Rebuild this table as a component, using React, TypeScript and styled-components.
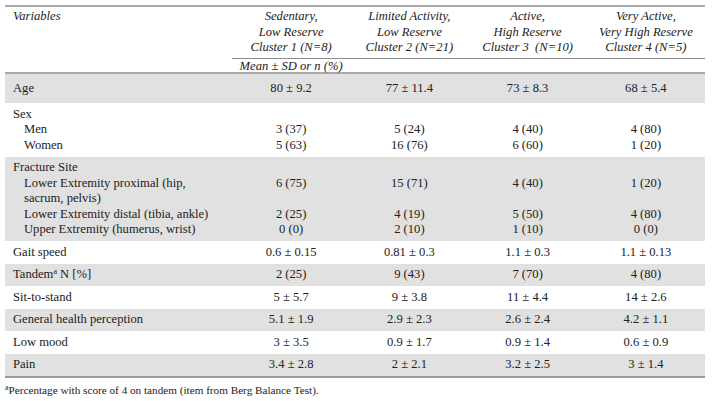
import React from "react";
import styled, { createGlobalStyle } from "styled-components";

const GlobalStyle = createGlobalStyle`
  html, body { margin: 0; padding: 0; background: #ffffff; }
  body { font-family: "Liberation Serif", "Times New Roman", serif; color: #222; }
`;

const Page = styled.div`
  padding: 5px 7px 0 5px;
  width: 700px;
`;

const Table = styled.table`
  width: 700px;
  table-layout: fixed;
  border-collapse: collapse;
  font-size: 12.6px;
  line-height: 15.5px;
  border-top: 2px solid #a9a9a9;
  border-bottom: 2px solid #9a9a9a;
`;

const HeadCell = styled.th<{ $left?: boolean; $rule?: boolean }>`
  font-weight: normal;
  font-style: italic;
  text-align: ${(p) => (p.$left ? "left" : "center")};
  vertical-align: top;
  padding: 2px ${(p) => (p.$left ? "0 0 8px" : "0 2px 0")};
  border-bottom: ${(p) => (p.$rule ? "1px solid #8c8c8c" : "none")};
  white-space: pre;
`;

const SubHeadRow = styled.tr`
  border-bottom: 2px solid #a9a9a9;
`;

const SubHead = styled.th`
  font-weight: normal;
  font-style: italic;
  text-align: center;
  line-height: 12px;
  height: 12px;
  padding: 1px 0 0;
`;

const Row = styled.tr<{ $shade?: boolean }>`
  background: ${(p) => (p.$shade ? "#e1e1e1" : "transparent")};
`;

const LabelCell = styled.td<{ $pad: number }>`
  padding: ${(p) => p.$pad}px 0 ${(p) => p.$pad}px 8px;
  text-align: left;
  vertical-align: top;
`;

const ValueCell = styled.td<{ $pad: number }>`
  padding: ${(p) => p.$pad}px 0;
  text-align: center;
  vertical-align: top;
`;

const Line = styled.div<{ $indent?: boolean }>`
  height: 15.5px;
  padding-left: ${(p) => (p.$indent ? "11px" : "0")};
  white-space: nowrap;
`;

const Sup = styled.sup`
  font-size: 8px;
  line-height: 0;
  vertical-align: 4px;
`;

const Footnote = styled.p`
  margin: 6px 0 0;
  font-size: 11.2px;
  line-height: 13px;
  color: #222;
`;

type Item = { label: React.ReactNode; values: string[]; indent?: boolean };

type RowData =
  | { kind: "single"; label: React.ReactNode; values: string[]; pad: number; shade: boolean }
  | { kind: "group"; items: Item[]; shade: boolean };

const rows: RowData[] = [
  { kind: "single", label: "Age", values: ["80 ± 9.2", "77 ± 11.4", "73 ± 8.3", "68 ± 5.4"], pad: 7, shade: true },
  {
    kind: "group",
    shade: false,
    items: [
      { label: "Sex", values: ["", "", "", ""] },
      { label: "Men", values: ["3 (37)", "5 (24)", "4 (40)", "4 (80)"], indent: true },
      { label: "Women", values: ["5 (63)", "16 (76)", "6 (60)", "1 (20)"], indent: true },
    ],
  },
  {
    kind: "group",
    shade: true,
    items: [
      { label: "Fracture Site", values: ["", "", "", ""] },
      { label: "Lower Extremity proximal (hip,", values: ["6 (75)", "15 (71)", "4 (40)", "1 (20)"], indent: true },
      { label: "sacrum, pelvis)", values: ["", "", "", ""], indent: true },
      { label: "Lower Extremity distal (tibia, ankle)", values: ["2 (25)", "4 (19)", "5 (50)", "4 (80)"], indent: true },
      { label: "Upper Extremity (humerus, wrist)", values: ["0 (0)", "2 (10)", "1 (10)", "0 (0)"], indent: true },
    ],
  },
  { kind: "single", label: "Gait speed", values: ["0.6 ± 0.15", "0.81 ± 0.3", "1.1 ± 0.3", "1.1 ± 0.13"], pad: 3.5, shade: false },
  {
    kind: "single",
    label: (
      <>
        Tandem<Sup>a</Sup> N [%]
      </>
    ),
    values: ["2 (25)", "9 (43)", "7 (70)", "4 (80)"],
    pad: 3.5,
    shade: true,
  },
  { kind: "single", label: "Sit-to-stand", values: ["5 ± 5.7", "9 ± 3.8", "11 ± 4.4", "14 ± 2.6"], pad: 3.5, shade: false },
  { kind: "single", label: "General health perception", values: ["5.1 ± 1.9", "2.9 ± 2.3", "2.6 ± 2.4", "4.2 ± 1.1"], pad: 3.5, shade: true },
  { kind: "single", label: "Low mood", values: ["3 ± 3.5", "0.9 ± 1.7", "0.9 ± 1.4", "0.6 ± 0.9"], pad: 3.5, shade: false },
  { kind: "single", label: "Pain", values: ["3.4 ± 2.8", "2 ± 2.1", "3.2 ± 2.5", "3 ± 1.4"], pad: 3.5, shade: true },
];

const clusters = [
  ["Sedentary,", "Low Reserve", "Cluster 1 (N=8)"],
  ["Limited Activity,", "Low Reserve", "Cluster 2 (N=21)"],
  ["Active,", "High Reserve", "Cluster 3  (N=10)"],
  ["Very Active,", "Very High Reserve", "Cluster 4 (N=5)"],
];

export default function App() {
  return (
    <>
      <GlobalStyle />
      <Page>
        <Table>
          <colgroup>
            <col style={{ width: 227 }} />
            <col style={{ width: 118.25 }} />
            <col style={{ width: 118.25 }} />
            <col style={{ width: 118.25 }} />
            <col style={{ width: 118.25 }} />
          </colgroup>
          <thead>
            <tr>
              <HeadCell $left rowSpan={2}>
                Variables
              </HeadCell>
              {clusters.map((c, i) => (
                <HeadCell key={i} $rule>
                  {c.join("\n")}
                </HeadCell>
              ))}
            </tr>
            <SubHeadRow>
              <SubHead>Mean ± SD or n (%)</SubHead>
              <SubHead />
              <SubHead />
              <SubHead />
            </SubHeadRow>
          </thead>
          <tbody>
            {rows.map((r, i) =>
              r.kind === "single" ? (
                <Row key={i} $shade={r.shade}>
                  <LabelCell $pad={r.pad}>
                    <Line>{r.label}</Line>
                  </LabelCell>
                  {r.values.map((v, j) => (
                    <ValueCell key={j} $pad={r.pad}>
                      <Line>{v}</Line>
                    </ValueCell>
                  ))}
                </Row>
              ) : (
                <Row key={i} $shade={r.shade}>
                  <LabelCell $pad={3.5}>
                    {r.items.map((it, k) => (
                      <Line key={k} $indent={it.indent}>
                        {it.label}
                      </Line>
                    ))}
                  </LabelCell>
                  {[0, 1, 2, 3].map((j) => (
                    <ValueCell key={j} $pad={3.5}>
                      {r.items.map((it, k) => (
                        <Line key={k}>{it.values[j]}</Line>
                      ))}
                    </ValueCell>
                  ))}
                </Row>
              )
            )}
          </tbody>
        </Table>
        <Footnote>
          <Sup>a</Sup>Percentage with score of 4 on tandem (item from Berg Balance Test).
        </Footnote>
      </Page>
    </>
  );
}
